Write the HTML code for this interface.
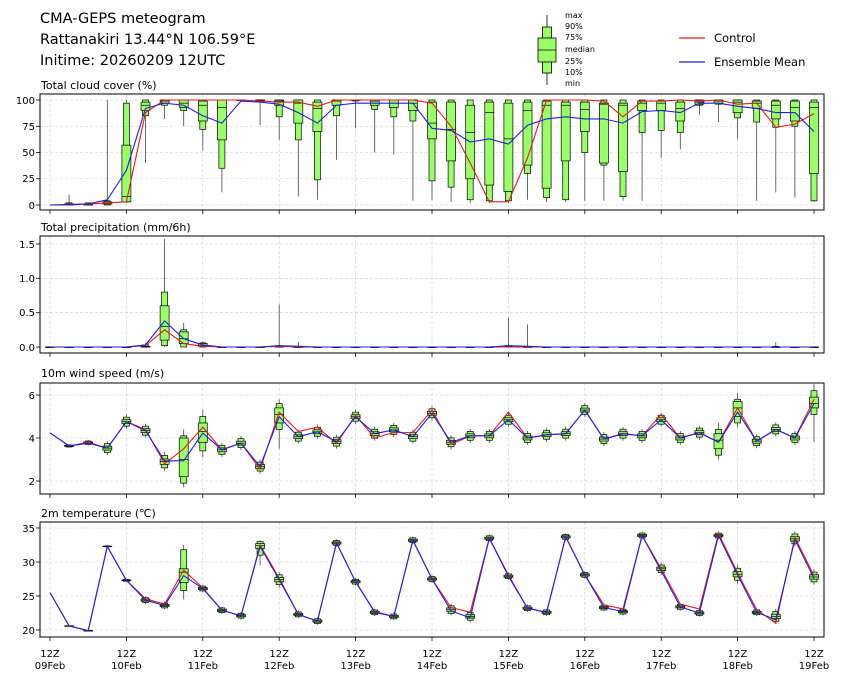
<!DOCTYPE html>
<html><head><meta charset="utf-8">
<style>
body{margin:0;background:#fff;width:841px;height:680px;overflow:hidden;font-family:"Liberation Sans","DejaVu Sans",sans-serif}
svg text{font-family:"DejaVu Sans","Liberation Sans",sans-serif;fill:#000}
</style></head><body>
<svg id="s" width="841" height="680" viewBox="0 0 841 680" xmlns="http://www.w3.org/2000/svg">
<rect width="841" height="680" fill="#fff"/>
<text x="40" y="23" font-size="14.5">CMA-GEPS meteogram</text>
<text x="40" y="44" font-size="14.5">Rattanakiri 13.44°N 106.59°E</text>
<text x="40" y="65" font-size="14.5">Initime: 20260209 12UTC</text>
<line x1="547" y1="15" x2="547" y2="85" stroke="#000" stroke-width="0.8"/>
<rect x="542.5" y="27" width="9" height="46" fill="#99ff66" stroke="#000" stroke-width="0.8"/>
<rect x="538" y="38" width="18" height="24" fill="#99ff66" stroke="#000" stroke-width="0.8"/>
<line x1="538" y1="50" x2="556" y2="50" stroke="#000" stroke-width="0.8"/>
<g font-size="8">
<text x="565" y="18">max</text><text x="565" y="29">90%</text><text x="565" y="40">75%</text><text x="565" y="52">median</text><text x="565" y="64">25%</text><text x="565" y="75">10%</text><text x="565" y="86">min</text>
</g>
<line x1="679" y1="38" x2="705" y2="38" stroke="#e41a1c" stroke-width="1.2"/>
<text x="714" y="42" font-size="11.5">Control</text>
<line x1="679" y1="62" x2="705" y2="62" stroke="#1f1fdd" stroke-width="1.2"/>
<text x="714" y="66" font-size="11.5">Ensemble Mean</text>
<g font-size="11">
<text x="41" y="89">Total cloud cover (%)</text>
<text x="41" y="231">Total precipitation (mm/6h)</text>
<text x="41" y="377">10m wind speed (m/s)</text>
<text x="41" y="517">2m temperature (℃)</text>
</g>
<g font-size="10" text-anchor="end">
<text x="35" y="104">100</text><text x="35" y="130">75</text><text x="35" y="156">50</text><text x="35" y="182">25</text><text x="35" y="209">0</text>
<text x="35" y="248">1.5</text><text x="35" y="282">1.0</text><text x="35" y="316">0.5</text><text x="35" y="351">0.0</text>
<text x="35" y="399">6</text><text x="35" y="442">4</text><text x="35" y="485">2</text>
<text x="35" y="532">35</text><text x="35" y="566">30</text><text x="35" y="600">25</text><text x="35" y="634">20</text>
</g>
<g id="plots"></g>
<g font-size="10" text-anchor="middle">
<text x="50" y="657">12Z</text><text x="50" y="669">09Feb</text>
<text x="126.4" y="657">12Z</text><text x="126.4" y="669">10Feb</text>
<text x="202.8" y="657">12Z</text><text x="202.8" y="669">11Feb</text>
<text x="279.2" y="657">12Z</text><text x="279.2" y="669">12Feb</text>
<text x="355.6" y="657">12Z</text><text x="355.6" y="669">13Feb</text>
<text x="432" y="657">12Z</text><text x="432" y="669">14Feb</text>
<text x="508.4" y="657">12Z</text><text x="508.4" y="669">15Feb</text>
<text x="584.8" y="657">12Z</text><text x="584.8" y="669">16Feb</text>
<text x="661.2" y="657">12Z</text><text x="661.2" y="669">17Feb</text>
<text x="737.6" y="657">12Z</text><text x="737.6" y="669">18Feb</text>
<text x="814" y="657">12Z</text><text x="814" y="669">19Feb</text>
</g>
</svg>
<script>
var NS="http://www.w3.org/2000/svg",P=document.getElementById("plots");
function el(t,a){var e=document.createElementNS(NS,t);for(var k in a)e.setAttribute(k,a[k]);P.appendChild(e);return e;}
function X(i){return 50+19.1*i;}
var panels=[{t:94,b:210,yt:[100,126.25,152.5,178.75,205]},{t:236,b:353,yt:[244,278.3,312.7,347]},{t:383,b:494,yt:[395,438,481]},{t:522,b:637,yt:[528,562,596,630]}];
panels.forEach(function(p){
 p.yt.forEach(function(y){el("line",{x1:40,x2:824,y1:y,y2:y,stroke:"#ccc","stroke-width":0.6,"stroke-dasharray":"3,2"});
  el("line",{x1:36,x2:40,y1:y,y2:y,stroke:"#000","stroke-width":0.8});});
 for(var d=0;d<11;d++){var x=X(d*4);el("line",{x1:x,x2:x,y1:p.t,y2:p.b,stroke:"#ccc","stroke-width":0.6,"stroke-dasharray":"3,2"});
  el("line",{x1:x,x2:x,y1:p.b,y2:p.b+4,stroke:"#000","stroke-width":0.8});}
});
function g(v,d){return [v-2.5*d,v-1.6*d,v-0.7*d,v,v+0.7*d,v+1.6*d,v+2.5*d];}
function draw(p,Y,boxes,red,blue){
 boxes.forEach(function(b,i){if(!b)return;var x=X(i);
  el("line",{x1:x,x2:x,y1:Y(b[6]),y2:Y(b[0]),stroke:"#444","stroke-width":0.8});
  el("rect",{x:x-3,y:Y(b[5]),width:6,height:Math.max(0.5,Y(b[1])-Y(b[5])),fill:"#99ff66",stroke:"#000","stroke-width":0.7});
  el("rect",{x:x-4.5,y:Y(b[4]),width:9,height:Math.max(0.5,Y(b[2])-Y(b[4])),fill:"#99ff66",stroke:"#000","stroke-width":0.7});
  el("line",{x1:x-4.5,x2:x+4.5,y1:Y(b[3]),y2:Y(b[3]),stroke:"#000","stroke-width":0.7});
 });
 el("polyline",{points:red.map(function(v,i){return X(i)+","+Y(v)}).join(" "),fill:"none",stroke:"#e41a1c","stroke-width":1.1});
 el("polyline",{points:blue.map(function(v,i){return X(i)+","+Y(v)}).join(" "),fill:"none",stroke:"#1f1fdd","stroke-width":1.1});
 el("rect",{x:40,y:p.t,width:784,height:p.b-p.t,fill:"none",stroke:"#000","stroke-width":1});
}
var cb=[null,[0,0,0,0,1,2,10],[0,0,0,1,1,2,2],[0,0,1,2,3,4,100],[2,3,3,8,57,97,100],[40,85,90,95,98,100,100],[82,95,97,99,100,100,100],[75,90,93,97,100,100,100],[52,72,80,95,99,100,100],[12,35,62,93,100,100,100],[100,100,100,100,100,100,100],[76,98,99,100,100,100,100],[62,84,95,99,100,100,100],[8,62,78,97,100,100,100],[5,24,70,92,98,100,100],[43,85,95,99,100,100,100],[73,99,100,100,100,100,100],[50,91,95,99,100,100,100],[48,84,93,97,100,100,100],[4,80,90,97,100,100,100],[5,23,63,78,98,100,100],[3,17,42,72,98,100,100],[2,5,25,69,95,100,100],[2,4,19,88,98,100,100],[2,4,13,63,97,100,100],[5,30,38,90,98,100,100],[3,7,16,95,99,100,100],[3,5,42,95,98,100,100],[4,50,70,91,98,100,100],[4,38,40,96,97,100,100],[4,8,32,95,97,100,100],[4,69,90,97,99,100,100],[45,71,90,97,99,100,100],[53,69,80,92,98,100,100],[86,95,96,98,100,100,100],[79,96,97,99,100,100,100],[63,83,88,98,100,100,100],[4,79,92,97,99,100,100],[12,74,82,95,99,100,100],[7,75,80,93,99,100,100],[3,4,30,93,98,100,100]];
var cr=[0,0,1,2,3,88,100,100,100,100,100,99,98,98,94,100,100,100,100,100,97,75,40,3,3,45,100,100,100,99,84,99,99,100,99,100,96,97,74,77,87];
var cm=[0,0.5,1,5,33,92,97,95,85,78,99,98,96,88,78,95,97,97,97,97,73,71,60,63,58,76,82,84,82,82,78,89,90,88,97,97,94,92,88,88,70];
draw(panels[0],function(v){return 205-1.05*v},cb,cr,cm);
var pb=[];for(var i=0;i<41;i++)pb.push([0,0,0,0,0,0,0]);
pb[5]=[0,0,0,0,0.01,0.03,0.06];pb[6]=[0,0.02,0.1,0.3,0.6,0.8,1.57];pb[7]=[0,0,0.05,0.12,0.22,0.25,0.35];pb[8]=[0,0,0.01,0.02,0.05,0.06,0.08];
pb[12]=[0,0,0,0,0.01,0.02,0.62];pb[13]=[0,0,0,0,0,0.01,0.07];pb[24]=[0,0,0,0,0.01,0.02,0.43];pb[25]=[0,0,0,0,0,0.01,0.33];pb[38]=[0,0,0,0,0,0.01,0.07];
var pr=[],pm=[];for(i=0;i<41;i++){pr.push(0);pm.push(0);}
pr[5]=0.02;pr[6]=0.25;pr[7]=0.05;pr[8]=0.01;pm[5]=0.03;pm[6]=0.38;pm[7]=0.12;pm[8]=0.03;pm[12]=0.02;pm[13]=0.01;pm[24]=0.02;pm[25]=0.01;pr[12]=0.01;
draw(panels[1],function(v){return 347-68.7*v},pb,pr,pm);
var wm=[4.24,3.63,3.76,3.53,4.76,4.34,2.94,2.94,4.23,3.45,3.76,2.67,4.99,4.06,4.29,3.83,4.99,4.2,4.38,4.06,5.15,3.8,4.1,4.1,4.85,4.0,4.15,4.2,5.3,3.95,4.2,4.1,4.85,4.0,4.25,3.8,5.2,3.85,4.4,4.0,5.6];
var wr=wm.slice();var wo={5:4.4,6:2.8,7:3.5,8:4.5,11:2.55,12:5.2,13:4.3,14:4.5,15:3.75,16:5.05,17:4.0,18:4.25,19:4.25,20:5.3,21:3.7,24:5.2,32:5.1,36:5.4,40:5.8,2:3.8};
for(var k in wo)wr[k]=wo[k];
var wb=wm.map(function(v,i){return i==0?null:g(v,0.13)});
wb[1]=g(3.63,0.03);wb[2]=g(3.78,0.05);
wb[7]=[1.7,1.9,2.2,3.0,4.0,4.1,4.4];wb[8]=[3.1,3.4,3.8,4.3,4.7,5.0,5.3];wb[12]=[3.5,4.4,4.7,5.1,5.4,5.6,5.8];wb[6]=g(2.9,0.18);wb[36]=[4.5,4.7,5.0,5.4,5.7,5.8,6.1];wb[35]=[3.0,3.2,3.5,3.9,4.2,4.4,4.7];wb[40]=[3.8,5.1,5.4,5.6,5.9,6.2,6.5];
draw(panels[2],function(v){return 438-21.5*(v-4)},wb,wr,wm);
var tm=[25.5,20.6,19.9,32.3,27.3,24.4,23.6,28.0,26.1,22.9,22.1,32.3,27.4,22.3,21.3,32.8,27.1,22.6,22.0,33.2,27.5,22.8,21.8,33.5,27.9,23.2,22.6,33.7,28.1,23.3,22.7,33.9,28.7,23.4,22.5,33.9,28.1,22.6,21.5,33.3,27.6];
var tr=tm.slice();var to={5:24.6,6:23.8,7:28.8,8:26.2,11:32.5,12:27.6,17:22.7,21:23.3,22:22.6,24:28.1,29:23.7,30:23.1,32:29,33:23.8,34:23.1,35:34.2,36:28.4,37:23.0,38:21.0,39:33.6,40:28.0};
for(k in to)tr[k]=to[k];
var tb=tm.map(function(v,i){return i==0?null:g(v,0.22)});
tb[1]=g(20.6,0.02);tb[2]=g(19.9,0.03);tb[3]=g(32.3,0.04);tb[4]=g(27.3,0.08);
tb[7]=[24.5,25.8,27,28.5,29,31.8,32.5];tb[11]=[29.5,31,32,32.4,32.7,33,33.2];tb[12]=g(27.4,0.45);tb[36]=g(28.2,0.55);tb[38]=g(22,0.45);tb[39]=g(33.4,0.45);tb[40]=g(27.8,0.45);tb[32]=g(29,0.35);tb[21]=g(23,0.35);tb[22]=g(22,0.35);
draw(panels[3],function(v){return 528+(35-v)*6.8},tb,tr,tm);
</script>
</body></html>
